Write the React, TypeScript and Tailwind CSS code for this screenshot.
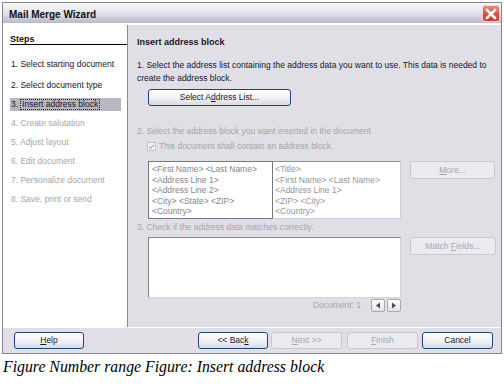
import React from "react";

const sans = "font-['Liberation_Sans',Arial,sans-serif]";

function Btn({
  children,
  className = "",
  disabled = false,
}: {
  children: React.ReactNode;
  className?: string;
  disabled?: boolean;
}) {
  return (
    <div
      className={`flex items-center justify-center rounded-[3px] border text-[8.5px] leading-none whitespace-nowrap ${
        disabled
          ? "border-[#c9c8cf] bg-[#ebeaef] text-[#a9a8ae]"
          : "border-[#27407a] bg-gradient-to-b from-white via-[#f3f3f6] to-[#d9d9e4] text-[#1a1a2a]"
      } ${className}`}
    >
      <span>{children}</span>
    </div>
  );
}

function U({ children }: { children: React.ReactNode }) {
  return <span className="underline underline-offset-1">{children}</span>;
}

const steps = [
  { t: "1. Select starting document", s: "on" },
  { t: "2. Select document type", s: "on" },
  { t: "3.", s: "sel" },
  { t: "4. Create salutation", s: "off" },
  { t: "5. Adjust layout", s: "off" },
  { t: "6. Edit document", s: "off" },
  { t: "7. Personalize document", s: "off" },
  { t: "8. Save, print or send", s: "off" },
];

export default function App() {
  return (
    <div className={`w-[504px] h-[388px] bg-white overflow-hidden ${sans}`}>
      <div className="ml-[2px] mt-[2px] w-[500px] h-[352px] border border-[#86869a] flex flex-col bg-[#e0dfe5]">
        {/* Title bar */}
        <div className="h-[22px] shrink-0 flex items-start justify-between pl-[6px] pr-[1px] bg-gradient-to-b from-[#f8f8fa] via-[#e3e3ea] to-[#b9b9cb] border-b-2 border-white">
          <span className="mt-[6px] text-[10px] leading-[12px] font-bold text-[#111]">
            Mail Merge Wizard
          </span>
          <div className="mt-[2px] w-[18px] h-[17px] rounded-[3px] border border-[#f4d6d0] bg-gradient-to-b from-[#eb8a78] via-[#d65443] to-[#c23c2c] flex items-center justify-center">
            <svg width="12" height="12" viewBox="0 0 12 12">
              <path d="M2 2 L10 10 M10 2 L2 10" stroke="white" strokeWidth="2.6" strokeLinecap="square" />
            </svg>
          </div>
        </div>

        {/* Content */}
        <div className="h-[302px] shrink-0 flex">
          {/* Steps panel */}
          <div className="w-[125px] shrink-0 bg-white border-r border-[#8a8a92] flex flex-col">
            <div className="ml-[7px] h-[20px] border-b border-black flex items-end">
              <span className="text-[9px] leading-[9px] font-bold text-[#111]">Steps</span>
            </div>
            <div className="mt-[10px] flex flex-col">
              {steps.map((s, i) => (
                <div
                  key={i}
                  className={`h-[19px] flex items-center pl-[7px] text-[8.5px] leading-none whitespace-nowrap ${
                    i === 0 ? "mb-[2px]" : ""
                  } ${s.s === "off" ? "text-[#a6a5ab]" : "text-[#16162a]"}`}
                >
                  {s.s === "sel" ? (
                    <div className="h-[13px] w-[111px] bg-[#b7b7bf] flex items-center pl-[1px]">
                      <span>3.</span>
                      <span className="ml-[2px] h-[11px] px-[1px] border border-dotted border-[#222] flex items-center">
                        Insert address block
                      </span>
                    </div>
                  ) : (
                    <span className="pl-[1px]">{s.t}</span>
                  )}
                </div>
              ))}
            </div>
          </div>

          {/* Right panel */}
          <div className="flex-1 pl-[9px] flex flex-col text-[8.5px] text-[#16162a]">
            <div className="mt-[11px] text-[9px] leading-[12px] font-bold whitespace-nowrap">
              Insert address block
            </div>
            <div className="mt-[11px] leading-[13px] whitespace-nowrap">
              1. Select the address list containing the address data you want to use. This data is needed to
              <br />
              create the address block.
            </div>
            <Btn className="mt-[4px] ml-[11px] w-[143px] h-[17px]">
              Select A<U>d</U>dress List...
            </Btn>
            <div className="mt-[19px] leading-[13px] whitespace-nowrap text-[#a6a5ab]">
              2. Select the address block you want inserted in the document
            </div>
            <div className="mt-[2px] h-[13px] ml-[10px] flex items-center text-[#a6a5ab] whitespace-nowrap">
              <svg width="9" height="9" viewBox="0 0 9 9" className="shrink-0">
                <rect x="0.5" y="0.5" width="8" height="8" fill="#f2f1f4" stroke="#c5c4cb" />
                <path d="M2 4.5 L3.7 6.3 L7 2.6" stroke="#b5b4ba" strokeWidth="1.3" fill="none" />
              </svg>
              <span className="ml-[3px]">This document shall contain an address block.</span>
            </div>
            <div className="mt-[8px] flex items-start">
              <div className="ml-[11px] flex h-[58px] bg-white">
                <div className="w-[125px] h-full border border-[#77777f] pl-[3px] pt-[2px] text-[#85848c] leading-[10.6px] whitespace-nowrap">
                  &lt;First Name&gt; &lt;Last Name&gt;
                  <br />
                  &lt;Address Line 1&gt;
                  <br />
                  &lt;Address Line 2&gt;
                  <br />
                  &lt;City&gt; &lt;State&gt; &lt;ZIP&gt;
                  <br />
                  &lt;Country&gt;
                </div>
                <div className="w-[128px] h-full border-t border-b border-r border-t-[#909098] border-b-[#d0d0d6] border-r-[#d0d0d6] pl-[2px] pt-[2px] text-[#96959c] leading-[10.6px] whitespace-nowrap">
                  &lt;Title&gt;
                  <br />
                  &lt;First Name&gt; &lt;Last Name&gt;
                  <br />
                  &lt;Address Line 1&gt;
                  <br />
                  &lt;ZIP&gt; &lt;City&gt;
                  <br />
                  &lt;Country&gt;
                </div>
              </div>
              <Btn disabled className="ml-[9px] w-[85px] h-[18px]">
                <U>M</U>ore...
              </Btn>
            </div>
            <div className="mt-[2px] leading-[13px] whitespace-nowrap text-[#a6a5ab]">
              3. Check if the address data matches correctly.
            </div>
            <div className="mt-[3px] flex items-start">
              <div className="ml-[11px] w-[253px] flex flex-col">
                <div className="h-[61px] bg-white border border-t-[#85858d] border-l-[#85858d] border-r-[#d4d4da] border-b-[#d4d4da]" />
                <div className="mt-[1px] h-[13px] flex items-center justify-end">
                  <span className="text-[#a6a5ab] whitespace-nowrap">Document: 1</span>
                  <div className="ml-[10px] w-[14px] h-[13px] rounded-[2px] border border-[#a8a8b2] bg-gradient-to-b from-white to-[#e2e2e8] flex items-center justify-center">
                    <svg width="6" height="7" viewBox="0 0 6 7">
                      <path d="M5 0.5 L1 3.5 L5 6.5 Z" fill="#4a4a55" />
                    </svg>
                  </div>
                  <div className="ml-[2px] w-[14px] h-[13px] rounded-[2px] border border-[#a8a8b2] bg-gradient-to-b from-white to-[#e2e2e8] flex items-center justify-center">
                    <svg width="6" height="7" viewBox="0 0 6 7">
                      <path d="M1 0.5 L5 3.5 L1 6.5 Z" fill="#4a4a55" />
                    </svg>
                  </div>
                </div>
              </div>
              <Btn disabled className="ml-[9px] w-[86px] h-[18px]">
                Match <U>F</U>ields...
              </Btn>
            </div>
          </div>
        </div>

        {/* Bottom bar */}
        <div className="flex-1 border-t border-white pt-[4px] flex items-start pr-[8px]">
          <Btn className="ml-[11px] w-[70px] h-[17px]">
            <U>H</U>elp
          </Btn>
          <div className="flex-1" />
          <Btn className="w-[70px] h-[17px]">
            &lt;&lt; Bac<U>k</U>
          </Btn>
          <Btn disabled className="ml-[3px] w-[71px] h-[17px]">
            <U>N</U>ext &gt;&gt;
          </Btn>
          <Btn disabled className="ml-[5px] w-[71px] h-[17px]">
            <U>F</U>inish
          </Btn>
          <Btn className="ml-[4px] w-[71px] h-[17px]">Cancel</Btn>
        </div>
      </div>
      <div className="mt-[4px] pl-[3px] font-['Liberation_Serif','Times_New_Roman',serif] italic text-[15.8px] leading-[18px] text-black whitespace-nowrap">
        Figure Number range Figure: Insert address block
      </div>
    </div>
  );
}
